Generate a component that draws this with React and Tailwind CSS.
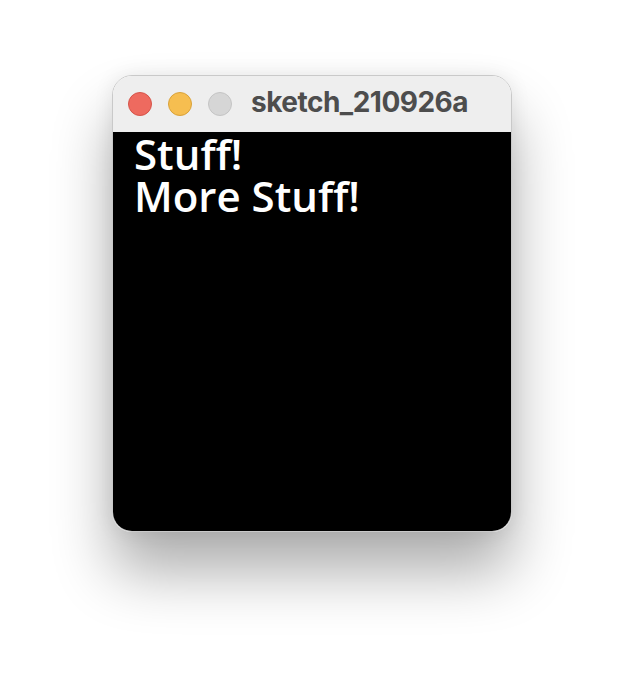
import React from 'react';

const TrafficLight = ({ color, border }) => (
  <div className={`w-6 h-6 rounded-full border ${color} ${border}`} />
);

export default function App() {
  return (
    <div className="w-[624px] h-[680px] bg-white flex justify-center pt-[75px]">
      <div className="w-[400px] h-[457px] rounded-[20px] border border-[#c9c9c9] overflow-hidden flex flex-col shadow-[0_40px_60px_rgba(0,0,0,0.32),0_0_20px_rgba(0,0,0,0.08)]">
        {/* title bar */}
        <div className="h-[56px] bg-[#eeeeee] flex items-center pl-[15px] shrink-0">
          <div className="flex gap-[16px]">
            <TrafficLight color="bg-[#ee6a5f]" border="border-[#d5544a]" />
            <TrafficLight color="bg-[#f6be50]" border="border-[#d9a23a]" />
            <TrafficLight color="bg-[#d6d6d6]" border="border-[#c4c4c4]" />
          </div>
          <span className="ml-[19px] mb-[4px] text-[28px] tracking-[-0.5px] font-bold text-[#4d4d4d] leading-none font-['Inter','Liberation_Sans',sans-serif]">
            sketch_210926a
          </span>
        </div>
        {/* sketch canvas */}
        <div className="flex-1 bg-black px-[21px] pt-[1px] text-white text-[42px] leading-[42px] font-semibold font-['Open_Sans','Noto_Sans',sans-serif]">
          <div>Stuff!</div>
          <div>More Stuff!</div>
        </div>
      </div>
    </div>
  );
}
